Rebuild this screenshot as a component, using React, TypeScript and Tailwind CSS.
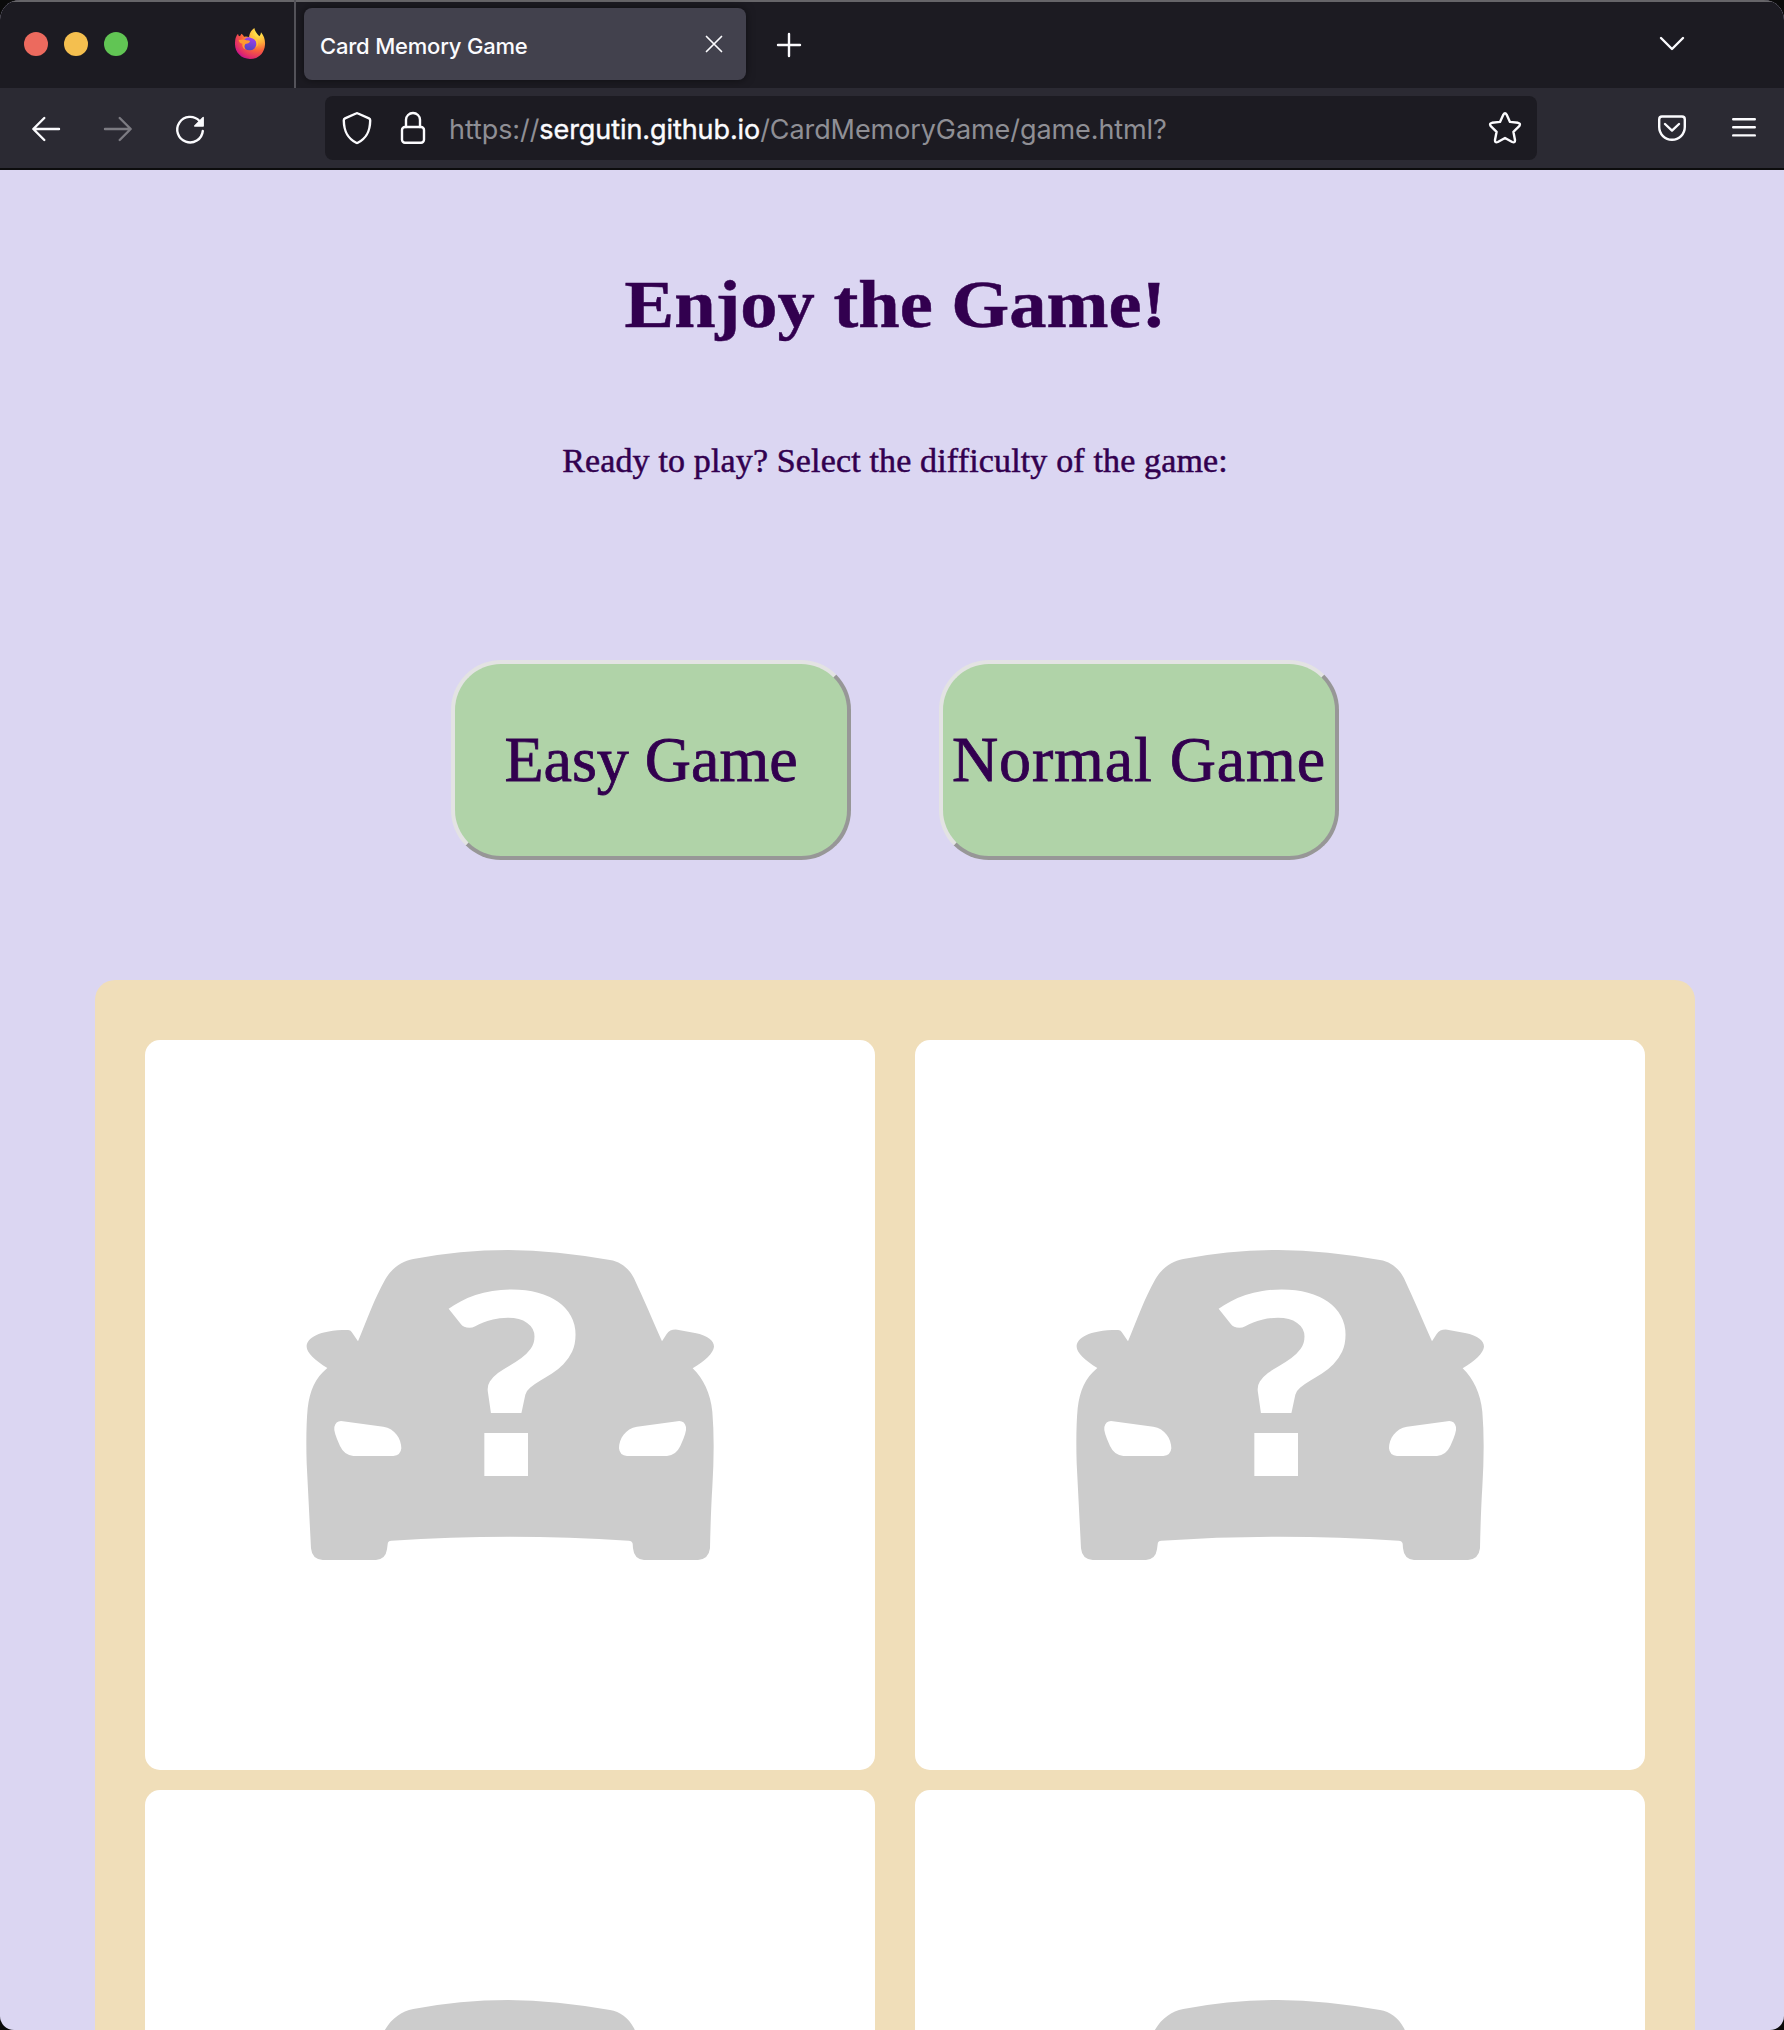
import React from "react";

const CarCard = () => (
  <div className="flex h-[730px] w-[730px] items-center justify-center rounded-[15px] bg-white">
    <svg width="440" height="350" viewBox="0 0 1320 1050">
      <path
        fill="#cccccc"
        d="M204 334 C230 272 254 204 286 148 C305 115 335 94 370 87 Q510 60 655 60 Q800 62 960 90 C990 95 1015 112 1032 145 C1060 205 1090 275 1116 334 L1130 312 Q1140 297 1162 299 L1215 309 C1255 317 1272 333 1272 350 C1270 370 1245 392 1208 415 C1240 445 1262 492 1267 545 Q1275 640 1267 770 Q1262 850 1260 955 Q1256 988 1224 990 L1062 990 Q1032 988 1029 955 L1028 941 Q1026 932 1016 932 Q660 908 304 932 Q293 932 293 943 L291 958 Q287 988 258 990 L98 990 Q66 988 63 955 L50 700 Q47 600 53 535 C60 480 75 445 112 414 C75 391 50 368 50 350 C50 325 85 300 172 300 Q181 299 185 306 Z"
      />
      <path fill="#fff" d="M153 573 L280 590 C315 596 334 626 334 655 Q332 677 310 678 L190 678 Q163 676 150 648 Q130 605 133 591 Q137 573 153 573 Z" />
      <path fill="#fff" d="M1168 573 L1041 590 C1006 596 987 626 987 655 Q989 677 1011 678 L1131 678 Q1158 676 1171 648 Q1191 605 1188 591 Q1184 573 1168 573 Z" />
      <text transform="translate(668 751) scale(1.25 1.014)" textAnchor="middle" className="fill-white font-['Lato'] text-[770px] font-black">
        ?
      </text>
      <rect x="540" y="549" width="220" height="230" fill="#cccccc" />
      <rect x="583" y="609" width="131" height="129" fill="#fff" />
    </svg>
  </div>
);

const FirefoxLogo = () => (
  <svg className="ml-[103px]" width="32" height="32" viewBox="0 0 96 96">
    <defs>
      <radialGradient id="fire" cx="0.78" cy="0.14" r="0.95">
        <stop offset="0" stopColor="#fff44f" />
        <stop offset="0.35" stopColor="#ffb13a" />
        <stop offset="0.62" stopColor="#f9603c" />
        <stop offset="0.9" stopColor="#e02a6b" />
        <stop offset="1" stopColor="#c8168a" />
      </radialGradient>
      <linearGradient id="globe" x1="0.7" y1="0" x2="0.4" y2="1">
        <stop offset="0" stopColor="#a53ff0" />
        <stop offset="1" stopColor="#5046c0" />
      </linearGradient>
    </defs>
    <path
      fill="url(#fire)"
      d="M12 17 Q13 23 16 25 Q20 24 22 17 Q28 20 30 26 Q37 24 45 27 C47 13 54 5 61 0 Q63 12 76 25 C81 20 80 17 81 13 C90 23 94 36 93 50 C91 77 72 93 48 93 C22 93 3 73 3 49 Q2 28 12 17 Z"
    />
    <circle cx="47" cy="47" r="20" fill="url(#globe)" />
    <path fill="#ff9a2e" d="M14 36 Q30 32 37 37 Q48 37 48 41 Q45 46 34 48 C30 53 31 61 35 64 C27 62 24 55 25 47 Q15 45 14 36 Z" />
    <path fill="#ffc63c" d="M45 27 C52 31 61 31 66 40 Q70 48 67 58 C75 50 72 32 60 25 Z" />
  </svg>
);

const line = {
  fill: "none",
  stroke: "#fbfbfe",
  strokeWidth: 2.4,
  strokeLinecap: "round" as const,
  strokeLinejoin: "round" as const,
};

const TabStrip = () => (
  <div className="flex h-[88px] shrink-0 items-center bg-[#1c1b22] shadow-[inset_0_2px_0_#666569]">
    <div className="ml-6 flex gap-4">
      <span className="h-6 w-6 rounded-full bg-[#ec6a5e]" />
      <span className="h-6 w-6 rounded-full bg-[#f4bf4f]" />
      <span className="h-6 w-6 rounded-full bg-[#61c554]" />
    </div>
    <div className="ml-[3px] flex w-[163px] shrink-0 items-center">
      <FirefoxLogo />
    </div>
    <div className="h-[88px] w-[2px] bg-[#54535a]" />
    <div className="ml-2 flex h-[72px] w-[442px] items-center justify-between rounded-lg bg-[#42414d] pl-4 pr-[23px] shadow-[0_0_8px_rgba(0,0,0,0.5)]">
      <span className="mt-[5px] whitespace-nowrap font-['Inter',sans-serif] text-[22px] font-medium tracking-[-0.2px] text-[#fbfbfe]">Card Memory Game</span>
      <svg width="18" height="18" viewBox="0 0 18 18" {...line} strokeWidth={1.7}>
        <path d="M1.5 1.5 16.5 16.5M16.5 1.5 1.5 16.5" />
      </svg>
    </div>
    <svg className="ml-[29px] mt-[2px]" width="28" height="28" viewBox="0 0 28 28" {...line}>
      <path d="M14 3V25M3 14H25" />
    </svg>
    <svg className="ml-auto mr-[98px]" width="28" height="20" viewBox="0 0 28 20" {...line}>
      <path d="M3 4 14 15 25 4" />
    </svg>
  </div>
);

const Toolbar = () => (
  <div className="flex h-[82px] shrink-0 items-center border-b-2 border-[#0c0c0d] bg-[#2b2a33]">
    <svg className="ml-[30px] mt-[2px]" width="32" height="32" viewBox="0 0 32 32" {...line}>
      <path d="M29 16H3.5M14.3 5 3.3 16 14.3 27" />
    </svg>
    <svg className="ml-10 mt-[2px]" width="32" height="32" viewBox="0 0 32 32" {...line} stroke="#7c7b82">
      <path d="M3 16H28.5M17.7 5 28.7 16 17.7 27" />
    </svg>
    <svg className="ml-10 mt-[4px]" width="32" height="32" viewBox="0 0 32 32" {...line}>
      <path d="M28.8 17 A12.8 12.8 0 1 1 25.5 7" />
      <path d="M29.2 3.5V12H20.7Z" fill="#fbfbfe" stroke="#fbfbfe" strokeWidth="1.4" />
    </svg>
    <div className="ml-[119px] flex h-16 w-[1212px] items-center rounded-lg bg-[#1c1b22]">
      <svg className="ml-4" width="32" height="36" viewBox="0 0 32 36" {...line}>
        <path d="M16 3.2 Q16.5 3.2 17 3.5 L28 8.3 Q29.3 8.9 29.2 10.5 C29 21 26 28 16.8 32.8 Q16 33.2 15.2 32.8 C6 28 3 21 2.8 10.5 Q2.7 8.9 4 8.3 L15 3.5 Q15.5 3.2 16 3.2 Z" />
      </svg>
      <svg className="ml-6" width="32" height="36" viewBox="0 0 32 36" {...line}>
        <path d="M9 17 V9.8 A7 6.8 0 0 1 23 9.8 V17" />
        <rect x="5" y="17" width="22" height="15.8" rx="3" />
      </svg>
      <div className="ml-[20px] mt-[4px] whitespace-nowrap font-['Inter',sans-serif] text-[27px] tracking-[-0.08px] text-[#8f8f95]">
        https://<span className="text-[#fbfbfe] [-webkit-text-stroke:0.4px_#fbfbfe]">sergutin.github.io</span>/CardMemoryGame/game.html?
      </div>
      <svg className="ml-auto mr-[14px]" width="36" height="36" viewBox="0 0 36 36" {...line}>
        <path d="M16.4 4.6 Q18 1.8 19.6 4.6 L23 11.9 L31 12.8 Q34.2 13.5 32.2 16.2 L26.4 21.8 L28 30 Q28.2 33.2 25.2 32 L18 28 L10.8 32 Q7.8 33.2 8 30 L9.6 21.8 L3.8 16.2 Q1.8 13.5 5 12.8 L13 11.9 Z" />
      </svg>
    </div>
    <svg className="ml-[119px]" width="32" height="32" viewBox="0 0 32 32" {...line}>
      <path d="M6 4.5H26Q28.8 4.5 28.8 7.5V15A12.8 12.8 0 0 1 3.2 15V7.5Q3.2 4.5 6 4.5Z" />
      <path d="M9 12 16 18.6 23 12" />
    </svg>
    <svg className="ml-[42px]" width="28" height="28" viewBox="0 0 28 28" {...line}>
      <path d="M3.2 5.2H24.8M3.2 13.2H24.8M3.2 21.4H24.8" />
    </svg>
  </div>
);

const GameButton = ({ children }: { children: React.ReactNode }) => (
  <button className="flex h-[200px] w-[400px] items-center justify-center whitespace-nowrap rounded-[50px] border-4 border-b-[#979797] border-l-[#e3e3e3] border-r-[#979797] border-t-[#e3e3e3] bg-[#b0d3a8] font-['Liberation_Serif',serif] text-[64px] leading-none text-[#32004f] [-webkit-text-stroke:0.8px_#32004f]">
    {children}
  </button>
);

export default function App() {
  return (
    <div className="h-[2030px] w-[1784px] overflow-hidden bg-[#0b0b0b]">
      <div className="flex h-[2030px] flex-col overflow-hidden rounded-b-[14px] rounded-t-[20px] bg-[#dbd6f2]">
        <TabStrip />
        <Toolbar />
        <main className="flex shrink-0 flex-col items-center pl-[6px] font-['Liberation_Serif',serif] text-[#32004f]">
          <h1 className="mt-[94px] h-[80px] scale-x-[1.095] whitespace-nowrap text-[68px] font-bold leading-[80px] [-webkit-text-stroke:0.5px_#32004f]">
            Enjoy the Game!
          </h1>
          <p className="mt-[97px] h-10 whitespace-nowrap text-[34px] leading-10 tracking-[0.15px] [-webkit-text-stroke:0.5px_#32004f]">
            Ready to play? Select the difficulty of the game:
          </p>
          <div className="mt-[179px] flex gap-[88px]">
            <GameButton>Easy Game</GameButton>
            <GameButton>
              <span className="tracking-[0.9px]">Normal Game</span>
            </GameButton>
          </div>
          <section className="mt-[120px] grid w-[1600px] grid-cols-2 gap-x-10 gap-y-5 rounded-[20px] bg-[#f0deb9] px-[50px] pt-[60px]">
            <CarCard />
            <CarCard />
            <CarCard />
            <CarCard />
          </section>
        </main>
      </div>
    </div>
  );
}
